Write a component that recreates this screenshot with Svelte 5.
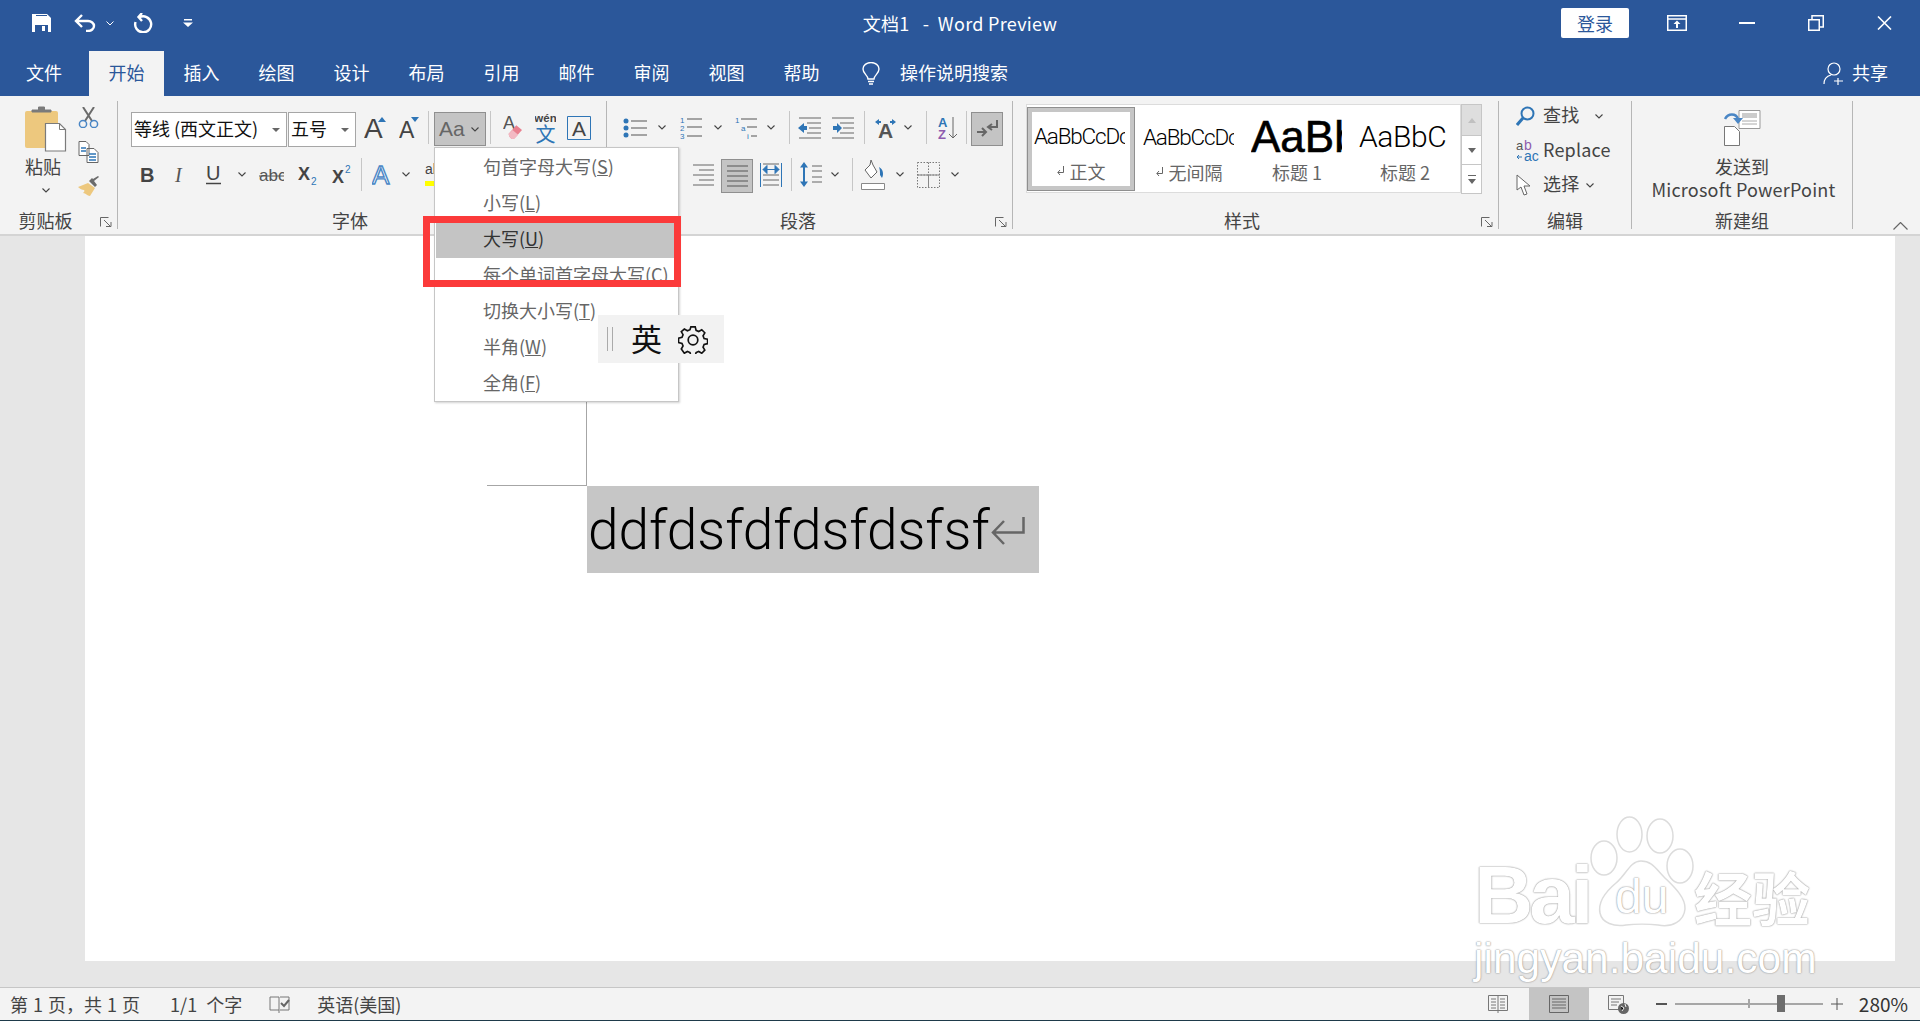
<script>
	const tabs = ['文件', '开始', '插入', '绘图', '设计', '布局', '引用', '邮件', '审阅', '视图', '帮助'];
	const activeTab = '开始';

	const caseItems = [
		{ label: '句首字母大写', key: 'S' },
		{ label: '小写', key: 'L' },
		{ label: '大写', key: 'U', hot: true },
		{ label: '每个单词首字母大写', key: 'C' },
		{ label: '切换大小写', key: 'T' },
		{ label: '半角', key: 'W' },
		{ label: '全角', key: 'F' }
	];

	const styleTiles = [
		{ sample: 'AaBbCcDc', label: '正文', mark: true, selected: true, kind: 'normal' },
		{ sample: 'AaBbCcDc', label: '无间隔', mark: true, kind: 'normal' },
		{ sample: 'AaBbCc', label: '标题 1', kind: 'h1' },
		{ sample: 'AaBbCc', label: '标题 2', kind: 'h2' }
	];
</script>

{#snippet chev(cls = '')}
	<svg class={cls} width="8" height="5" viewBox="0 0 8 5"><path d="M.5.5 4 4 7.5.5" fill="none" stroke="#444" stroke-width="1.1" /></svg>
{/snippet}

{#snippet launcher()}
	<svg class="launcher" width="12" height="10" viewBox="0 0 12 10"><path d="M.5 9.5V.5h8M4 3l6 6M6 9.5h5V5" fill="none" stroke="#666" /></svg>
{/snippet}

{#snippet sep(cls = '')}
	<span class="sep {cls}"></span>
{/snippet}

<div class="word">
	<header class="titlebar">
		<div class="qat">
			<svg class="ml32" width="19" height="18" viewBox="0 0 19 18"><path d="M0 0h15l4 4v14H0z" fill="#fff" /><path d="M3 11h13v7H3z" fill="#2b579a" /><path d="M10 12h3v5h-3z" fill="#fff" /><path d="M4 1h11v1H4z" fill="#2b579a" /></svg>
			<svg class="ml23" width="22" height="18" viewBox="0 0 22 18"><path d="M8 1 2 7l6 6M2 7h12a6 5 0 0 1 0 10h-2" fill="none" stroke="#fff" stroke-width="2.4" /></svg>
			<svg class="ml10" width="8" height="5" viewBox="0 0 8 5"><path d="M.5.5 4 4 7.5.5" fill="none" stroke="#fff" /></svg>
			<svg class="ml19" width="20" height="20" viewBox="0 0 20 20"><path d="M6.500 4.200A8 8 0 1 1 2.500 9M9 0 5.500 4 9 8" fill="none" stroke="#fff" stroke-width="2.400" /></svg>
			<svg class="ml30" width="10" height="8" viewBox="0 0 10 8"><path d="M1 0h8v1.500H1zM0 3.500h10L5 8z" fill="#fff" /></svg>
		</div>
		<div class="doctitle">文档1&nbsp;&nbsp;&nbsp;-&nbsp;&nbsp;Word Preview</div>
		<div class="winctl">
			<button class="signin">登录</button>
			<svg class="ml38" width="20" height="16" viewBox="0 0 20 16"><path d="M.75.75h18.500v14.500H.75zM1 4h18" fill="none" stroke="#fff" stroke-width="1.500" /><path d="M10 5.500 6.500 9H9v4h2V9h2.500z" fill="#fff" /></svg>
			<svg class="ml52" width="16" height="2" viewBox="0 0 16 2"><path d="M0 0h16v2H0z" fill="#fff" /></svg>
			<svg class="ml53" width="16" height="16" viewBox="0 0 16 16"><path d="M.75 4.750h10.500v10.500H.75zM4 4V.75h11.250V12H12" fill="none" stroke="#fff" stroke-width="1.500" /></svg>
			<svg class="ml53 mr28" width="15" height="14" viewBox="0 0 15 14"><path d="m1 .5 13 13M14 .5l-13 13" fill="none" stroke="#fff" stroke-width="1.600" /></svg>
		</div>
	</header>

	<nav class="tabs">
		{#each tabs as tab}
			<div class="tab" class:active={tab === activeTab}>{tab}</div>
		{/each}
		<svg class="ml23" width="18" height="23" viewBox="0 0 18 23"><path d="M6 17c0-4-5-5-5-10a8 6.500 0 0 1 16 0c0 5-5 6-5 10zM6 19.500h6M7 22h4" fill="none" stroke="#fff" stroke-width="1.400" /></svg>
		<span class="search">操作说明搜索</span>
		<div class="share">
			<svg width="22" height="23" viewBox="0 0 22 23"><circle cx="11" cy="7" r="6" fill="none" stroke="#fff" stroke-width="1.200" /><path d="M1 22c0-5 3-8 7-9M15 16v7M11 19h9" fill="none" stroke="#fff" stroke-width="1.200" /></svg>
			<span>共享</span>
		</div>
	</nav>

	<section class="ribbon">
		<div class="group g-clip">
			<div class="clip-body">
				<div class="paste">
					<svg width="42" height="46" viewBox="0 0 42 46"><rect x="0" y="5" width="33" height="37" rx="2" fill="#edc87e" /><path d="M7 6h19v-2h-6.500V1h-6v3H7z" fill="#7b7b7b" stroke="#7b7b7b" /><path d="M20.500 17.500h14l6 6v21.500h-20z" fill="#fff" stroke="#7b7b7b" stroke-width="1.200" /><path d="M34.500 17.500v6h6" fill="none" stroke="#7b7b7b" /></svg>
					<span class="pastelabel">粘贴</span>
					{@render chev('pastechev')}
				</div>
				<div class="clip-tools">
					<svg class="mt1" width="21" height="21" viewBox="0 0 21 21"><path d="M5 0l9 14M16 0 7 14" stroke="#6b6b6b" stroke-width="2" fill="none" /><circle cx="5" cy="17" r="3.600" fill="none" stroke="#4a86c5" stroke-width="1.500" /><circle cx="16" cy="17" r="3.600" fill="none" stroke="#4a86c5" stroke-width="1.500" /></svg>
					<svg width="21" height="22" viewBox="0 0 21 22"><path d="M1 .5h7l3 3v11H1zM9 7.500h7l4 4v10H9z" fill="#fff" stroke="#666" /><path d="M3 7h5M3 10h5M11 13h7M11 16h7M11 19h7" stroke="#2e75b6" stroke-width="1.300" /></svg>
					<svg width="23" height="20" viewBox="0 0 23 20"><path d="m0 11 10-4 7 5-5 8c-3 0-4-3-7-3 1-1 2-2 1-3-2 0-4-1-6-3z" fill="#edc87e" /><path d="m11 5 6 6 2-2-3-4 5-4-1-1-5 3-1-1z" fill="#6b6b6b" /></svg>
				</div>
			</div>
			<div class="foot p-clip"><span class="glabel">剪贴板</span>{@render launcher()}</div>
		</div>

		<div class="group g-font">
			<div class="row">
				<div class="combo c-font ml13"><span>等线 (西文正文)</span><i class="tri"></i></div>
				<div class="combo c-size ml1"><span>五号</span><i class="tri"></i></div>
				<svg class="ml8" width="22" height="21" viewBox="0 0 22 21"><text x="0" y="21" font-size="28" fill="#444">A</text><path d="m14 5 4-5 4 5z" fill="#2e75b6" /></svg>
				<svg class="ml13" width="20" height="21" viewBox="0 0 20 21"><text x="0" y="21" font-size="23" fill="#444">A</text><path d="m12 0h8l-4 5z" fill="#2e75b6" /></svg>
				{@render sep('ml9')}
				<div class="hotbtn aa ml5"><span>Aa</span>{@render chev('aachev')}</div>
				{@render sep('ml4')}
				<svg class="ml12" width="19" height="30" viewBox="0 0 20 30"><text x="0" y="16" font-size="19" fill="#555">A</text><path d="m6 21 8-9 6 5-8 9c-3 2-6-2-6-5z" fill="#e9808f" /><path d="m6 21 4-4 6 5-4 4c-3 2-6-2-6-5z" fill="#f3b9c3" /></svg>
				<svg class="ml13" width="21" height="33" viewBox="0 0 21 33"><text x="10.500" y="11" font-size="11.500" font-weight="bold" text-anchor="middle" fill="#444">wén</text><text x="10.500" y="31" font-size="20" text-anchor="middle" fill="#2e75b6" class="cjk">文</text></svg>
				<svg class="ml11" width="24" height="24" viewBox="0 0 24 24"><path d="M.5.5h23v23H.5z" fill="none" stroke="#2e75b6" /><text x="12" y="20" font-size="21" text-anchor="middle" fill="#444">A</text></svg>
			</div>
			<div class="row row2">
				<svg class="ml22" width="14" height="16" viewBox="0 0 14 16"><text x="0" y="15" font-size="20" font-weight="bold" fill="#444">B</text></svg>
				<svg class="ml19" width="14" height="16" viewBox="0 0 14 16"><text x="2" y="15" font-size="20" font-style="italic" class="serif" fill="#555">I</text></svg>
				<svg class="ml19" width="15" height="20" viewBox="0 0 15 20"><text x="0" y="15" font-size="20" fill="#444">U</text><path d="M0 18.500h15" stroke="#444" stroke-width="1.500" /></svg>
				{@render chev('ml17')}
				<svg class="ml13" width="25" height="16" viewBox="0 0 25 16"><text x="0" y="14" font-size="17" fill="#555">abc</text><path d="M0 9h25" stroke="#555" /></svg>
				<svg class="ml14" width="20" height="20" viewBox="0 0 20 20"><text x="0" y="15" font-size="18" font-weight="bold" fill="#444">X</text><text x="13" y="20" font-size="10" fill="#2e75b6">2</text></svg>
				<svg class="ml14" width="20" height="20" viewBox="0 0 20 20"><text x="0" y="18" font-size="18" font-weight="bold" fill="#444">X</text><text x="13" y="8" font-size="10" fill="#2e75b6">2</text></svg>
				{@render sep('ml9')}
				<svg class="ml10" width="20" height="22" viewBox="0 0 20 22"><text x="0" y="20" font-size="26" fill="#fff" stroke="#4a86c5" stroke-width="1.400">A</text></svg>
				{@render chev('ml10')}
				<svg class="ml15" width="20" height="24" viewBox="0 0 20 24"><text x="0" y="11" font-size="14" fill="#444">ab</text><path d="M0 18h20v5H0z" fill="#ff0" /></svg>
			</div>
			<div class="foot p-font"><span class="glabel">字体</span></div>
		</div>

		<div class="group g-para">
			<div class="row">
				<svg class="ml16" width="24" height="20" viewBox="0 0 24 20"><path d="M8 3h16M8 10h16M8 17h16" stroke="#555" stroke-width="1.200" /><circle cx="3" cy="3" r="2.500" fill="#2e75b6" /><circle cx="3" cy="10" r="2.500" fill="#2e75b6" /><circle cx="3" cy="17" r="2.500" fill="#2e75b6" /></svg>
				{@render chev('ml11')}
				<svg class="ml14" width="22" height="24" viewBox="0 0 22 24"><text x="0" y="7" font-size="8" fill="#2e75b6">1</text><text x="0" y="15" font-size="8" fill="#2e75b6">2</text><text x="0" y="23" font-size="8" fill="#2e75b6">3</text><path d="M7 3h15M7 11h15M7 20h15" stroke="#555" stroke-width="1.200" /></svg>
				{@render chev('ml12')}
				<svg class="ml13" width="23" height="24" viewBox="0 0 23 24"><text x="0" y="7" font-size="8" fill="#2e75b6">1</text><text x="6" y="15" font-size="8" fill="#2e75b6">a</text><text x="12" y="23" font-size="8" fill="#2e75b6">i</text><path d="M6 3h16M12 11h10M16 20h6" stroke="#555" stroke-width="1.200" /></svg>
				{@render chev('ml9')}
				{@render sep('ml14')}
				<svg class="ml8" width="23" height="22" viewBox="0 0 23 22"><path d="M1 1h22M9 6h14M11 11h12M9 16h14M1 21h22" stroke="#666" stroke-width="1.100" /><path d="M0 11l6-5v3h3v4H6v3z" fill="#2e75b6" /></svg>
				<svg class="ml11" width="23" height="22" viewBox="0 0 23 22"><path d="M0 1h22M8 6h14M11 11h11M8 16h14M0 21h22" stroke="#666" stroke-width="1.100" /><path d="M10 11l-5-5v3H1v4h4v3z" fill="#2e75b6" /></svg>
				{@render sep('ml9')}
				<svg class="ml9" width="23" height="20" viewBox="0 0 23 20"><text x="11.500" y="20" font-size="21" font-weight="bold" text-anchor="middle" fill="#555">A</text><path d="M1 4l4-3v2h2v2H5v2zM22 4l-4-3v2h-2v2h2v2z" fill="#2e75b6" /></svg>
				{@render chev('ml7')}
				{@render sep('ml14')}
				<svg class="ml11" width="19" height="24" viewBox="0 0 19 24"><text x="0" y="11" font-size="13" font-weight="bold" fill="#2e75b6">A</text><text x="0" y="23" font-size="13" font-weight="bold" fill="#8e5cae">Z</text><path d="M15 1v21M11 18l4 4 4-4" fill="none" stroke="#666" /></svg>
				{@render sep('ml9')}
				<div class="hotbtn pil ml4">
					<svg width="22" height="20" viewBox="0 0 22 20"><path d="M21 1v7h-8M16 5l-4 3 4 3" fill="none" stroke="#666" stroke-width="2" /><path d="M1 13h8M6 9l4 4-4 4" fill="none" stroke="#666" stroke-width="2" /></svg>
				</div>
			</div>
			<div class="row row2">
				<svg class="ml86" width="21" height="22" viewBox="0 0 21 22"><path d="M0 1h21M6 6h15M0 11h21M6 16h15M0 21h21" stroke="#666" stroke-width="1.100" /></svg>
				<div class="hotbtn just ml7">
					<svg width="21" height="22" viewBox="0 0 21 22"><path d="M0 1h21M0 6h21M0 11h21M0 16h21M0 21h21" stroke="#555" stroke-width="1.100" /></svg>
				</div>
				<svg class="ml7" width="22" height="24" viewBox="0 0 22 24"><path d="M3 1h16M3 12h16M3 17h16M3 22h16" stroke="#666" /><path d="M.5 0v24M21.500 0v24" stroke="#2e75b6" /><path d="M3 6.500h16M3 6.500l4-4v8zM19 6.500l-4-4v8z" stroke="#2e75b6" fill="#2e75b6" /></svg>
				{@render sep('ml9')}
				<svg class="ml8" width="22" height="25" viewBox="0 0 22 25"><path d="M4 0 0 5.500h3v14H0L4 25l4-5.500H5v-14h3z" fill="#2e75b6" /><path d="M12 4h10M12 9h10M12 15h10M12 20h10" stroke="#666" stroke-width="1.100" /></svg>
				{@render chev('ml9')}
				{@render sep('ml13')}
				<svg class="ml8" width="24" height="30" viewBox="0 0 24 30"><path d="M.5 23.500h23v6H.5z" fill="#fff" stroke="#888" /><path d="m10 0-1 5-5 5 6 8 6-6-4-7z" fill="#fff" stroke="#666" /><path d="M18 7c4 2 5 7 3 11l-2-3c0-3 0-5-1-8z" fill="#2e75b6" /></svg>
				{@render chev('ml11')}
				<svg class="ml13" width="23" height="26" viewBox="0 0 23 26"><path d="M.5.500h22v25H.5zM11.500.500v25M.5 13h22" fill="none" stroke="#777" stroke-dasharray="1.500 1.500" /><path d="M11.500 13v12.500M.5 13h22" stroke="#888" /></svg>
				{@render chev('ml11')}
			</div>
			<div class="foot p-para"><span class="glabel">段落</span>{@render launcher()}</div>
		</div>

		<div class="group g-styles">
			<div class="styles-body">
				<div class="gallery">
					{#each styleTiles as tile}
						<div class="tile" class:selected={tile.selected}>
							<div class="sample {tile.kind}">{tile.sample}</div>
							<div class="stylelabel">
								{#if tile.mark}<svg width="8" height="10" viewBox="0 0 8 10"><path d="M6.500 0v6.500H1M3 4 .8 6.500 3 9" fill="none" stroke="#666" /></svg>{/if}
								{tile.label}
							</div>
						</div>
					{/each}
				</div>
				<div class="scroller">
					<div class="sbtn sb-up"><svg width="8" height="5" viewBox="0 0 8 5"><path d="M4 0 8 5H0z" fill="#c0c0c0" /></svg></div>
					<div class="sbtn sb-down"><svg width="8" height="5" viewBox="0 0 8 5"><path d="M0 0h8L4 5z" fill="#666" /></svg></div>
					<div class="sbtn sb-more"><svg width="8" height="9" viewBox="0 0 8 9"><path d="M0 0h8v1H0zM0 4h8L4 9z" fill="#666" /></svg></div>
				</div>
			</div>
			<div class="foot p-styles"><span class="glabel">样式</span>{@render launcher()}</div>
		</div>

		<div class="group g-edit">
			<div class="edit-rows">
				<div class="editrow">
					<svg width="19" height="20" viewBox="0 0 19 20"><circle cx="11.500" cy="7.500" r="6" fill="none" stroke="#2e75b6" stroke-width="2" /><path d="M7 12 1 19" stroke="#2e75b6" stroke-width="3" /></svg>
					<span>查找</span>{@render chev('echev1')}
				</div>
				<div class="editrow">
					<svg width="23" height="22" viewBox="0 0 23 22"><text x="0" y="10" font-size="13" fill="#555">a</text><text x="8" y="10" font-size="14" fill="#8e5cae">b</text><text x="8" y="21" font-size="14" fill="#2e75b6">ac</text><path d="M1 17h5M3 15l-2 2 2 2" fill="none" stroke="#2e75b6" /></svg>
					<span>Replace</span>
				</div>
				<div class="editrow">
					<svg width="15" height="22" viewBox="0 0 15 22"><path d="M1 1v15l4-3 3 8 3-1-3-8h6z" fill="#fff" stroke="#666" /></svg>
					<span>选择</span>{@render chev('echev2')}
				</div>
			</div>
			<div class="foot"><span class="glabel">编辑</span></div>
		</div>

		<div class="group g-new">
			<div class="newbtn">
				<svg width="37" height="36" viewBox="0 0 37 36"><path d="M15 .5h21v18H15z" fill="#fff" stroke="#999" /><path d="M18 3h15v5H18z" fill="#ccc" /><path d="M18 11h15M18 14h15" stroke="#aaa" /><path d="M.5 16.500h10l5 5v14H.5z" fill="#fff" stroke="#777" /><path d="M1 9c3-6 11-6 13 0" fill="none" stroke="#4a86c5" stroke-width="2.500" /><path d="m9 8 5 6 5-6z" fill="#4a86c5" /></svg>
				<span class="l1">发送到</span>
				<span class="l2">Microsoft PowerPoint</span>
			</div>
			<div class="foot"><span class="glabel">新建组</span></div>
		</div>

		<div class="collapse">
			<svg width="15" height="8" viewBox="0 0 15 8"><path d="m.5 7.500 7-7 7 7" fill="none" stroke="#666" stroke-width="1.200" /></svg>
		</div>
	</section>

	<main class="docarea">
		<div class="page">
			<div class="cropmark"></div>
			<div class="selection">
				<span>ddfdsfdfdsfdsfsf</span>
				<svg width="34" height="29" viewBox="0 0 34 29"><path d="M32.500 0v15.500H3M13 4 2 15.500 13 27" fill="none" stroke="#666" stroke-width="2.500" /></svg>
			</div>
		</div>
	</main>

	<footer class="status">
		<span class="s1">第 1 页，共 1 页</span>
		<span class="s2">1/1 个字</span>
		<svg class="s3" width="21" height="18" viewBox="0 0 21 18"><path d="M10 2H1v13h9M10 2v16M11 2h9v13h-9" fill="none" stroke="#777" /><path d="m12 8 3 3 5-6" fill="none" stroke="#666" stroke-width="2" /></svg>
		<span class="s4">英语(美国)</span>
		<div class="viewbtns">
			<svg width="20" height="18" viewBox="0 0 20 18"><path d="M.5.500h19v15H.5zM10 0v18M3 4h5M3 7h5M3 10h5M3 13h5M12 4h5M12 7h5M12 10h5M12 13h5" fill="none" stroke="#777" /></svg>
			<div class="viewactive"><svg width="20" height="18" viewBox="0 0 20 18"><path d="M.5.500h19v17H.5zM3 4h14M3 7h14M3 10h14M3 13h14" fill="none" stroke="#666" /></svg></div>
			<svg width="21" height="19" viewBox="0 0 21 19"><path d="M.5.500h15v14H.5zM3 4h10M3 7h8M3 10h6" fill="none" stroke="#777" /><circle cx="15.500" cy="13.500" r="5.500" fill="#666" /><path d="M13 11l3 2-2 3M17 9l1 3" stroke="#f3f3f3" /></svg>
		</div>
		<div class="zoomctl">
			<span class="zminus"></span>
			<div class="ztrack"><span class="ztick"></span><span class="zthumb"></span></div>
			<svg width="12" height="12" viewBox="0 0 12 12"><path d="M6 0v12M0 6h12" stroke="#555" /></svg>
			<span class="zval">280%</span>
		</div>
	</footer>

	<div class="casemenu">
		{#each caseItems as item}
			<div class="caseitem" class:hot={item.hot}>{item.label}(<u>{item.key}</u>)</div>
		{/each}
	</div>
	<div class="redbox"></div>

	<div class="ime">
		<span class="imegrip"></span>
		<span class="imechar">英</span>
		<svg width="30" height="30" viewBox="0 0 30 30">
			<path d="M12.500 1h5l1 4 3 1.300 3.500-2 3.500 3.500-2 3.500 1.200 3 4 1v5l-4 1-1.200 3 2 3.500-3.500 3.500-3.500-2-3 1.200-1 4h-5l-1-4-3-1.200-3.500 2L1.500 26.500l2-3.500-1.200-3-4-1v-5l4-1 1.200-3-2-3.500L5 3.500l3.500 2 3-1.200z" transform="translate(2 2) scale(.87)" fill="none" stroke="#111" stroke-width="1.900" />
			<circle cx="15" cy="16" r="4.800" fill="none" stroke="#111" stroke-width="1.700" />
		</svg>
	</div>

	<div class="watermark">
		<span class="wm-bai">Bai</span>
		<svg class="wm-paw" width="106" height="114" viewBox="0 0 106 114">
			<g fill="#fff" stroke="#dcdcdc" stroke-width="1.500">
				<ellipse cx="14" cy="43" rx="13" ry="17" />
				<ellipse cx="39.500" cy="19.500" rx="12.500" ry="17.500" />
				<ellipse cx="70" cy="21" rx="13" ry="17" />
				<ellipse cx="90" cy="51" rx="13" ry="17" />
				<path d="M51 46C40 46 36 60 26 68 14 78 8 88 10 98c2 10 14 14 26 12 8-1 24-1 32 0 14 3 26-4 27-16 1-12-13-24-21-32-8-8-12-16-23-16z" />
			</g>
		</svg>
		<span class="wm-du">du</span>
		<span class="wm-jy">经验</span>
		<span class="wm-url">jingyan.baidu.com</span>
	</div>
</div>

<style>
	:global(body) {
		margin: 0;
		background: #e6e6e6;
	}

	.word {
		position: relative;
		width: 1920px;
		height: 1021px;
		overflow: hidden;
		display: flex;
		flex-direction: column;
		font-family: "Noto Sans CJK SC", "Liberation Sans", sans-serif;
		font-size: 18px;
		line-height: 22px;
		color: #444;
		background: #e6e6e6;
	}

	svg {
		flex: none;
		display: block;
	}

	svg text {
		font-family: "Liberation Sans", sans-serif;
	}

	svg text.cjk {
		font-family: "Noto Sans CJK SC", sans-serif;
	}

	svg text.serif {
		font-family: "Liberation Serif", serif;
	}

	:global(.ml1) { margin-left: 1px; }
	:global(.ml4) { margin-left: 4px; }
	:global(.ml5) { margin-left: 5px; }
	:global(.ml7) { margin-left: 7px; }
	:global(.ml8) { margin-left: 8px; }
	:global(.ml9) { margin-left: 9px; }
	:global(.ml10) { margin-left: 10px; }
	:global(.ml11) { margin-left: 11px; }
	:global(.ml12) { margin-left: 12px; }
	:global(.ml13) { margin-left: 13px; }
	:global(.ml14) { margin-left: 14px; }
	:global(.ml15) { margin-left: 15px; }
	:global(.ml16) { margin-left: 16px; }
	:global(.ml17) { margin-left: 17px; }
	:global(.ml19) { margin-left: 19px; }
	:global(.ml22) { margin-left: 22px; }
	:global(.ml23) { margin-left: 23px; }
	:global(.ml30) { margin-left: 30px; }
	:global(.ml32) { margin-left: 32px; }
	:global(.ml38) { margin-left: 38px; }
	:global(.ml52) { margin-left: 52px; }
	:global(.ml53) { margin-left: 53px; }
	:global(.ml86) { margin-left: 86px; }
	:global(.mr28) { margin-right: 28px; }
	:global(.mt1) { margin-top: 1px; }

	.titlebar {
		height: 51px;
		flex: none;
		display: grid;
		grid-template-columns: 1fr auto 1fr;
		align-items: center;
		background: #2b579a;
		color: #fff;
	}

	.qat {
		display: flex;
		align-items: center;
		padding-bottom: 5px;
	}

	.doctitle {
		padding-bottom: 5px;
		letter-spacing: 0.3px;
	}

	.winctl {
		display: flex;
		align-items: center;
		justify-content: flex-end;
		padding-bottom: 5px;
	}

	.signin {
		width: 68px;
		height: 30px;
		padding: 0;
		border: 0;
		border-radius: 2px;
		background: #fff;
		color: #2b579a;
		font: inherit;
	}

	.tabs {
		height: 45px;
		flex: none;
		display: flex;
		align-items: stretch;
		padding-left: 7px;
		background: #2b579a;
		color: #fff;
	}

	.tabs > svg {
		align-self: center;
	}

	.tab {
		width: 75px;
		display: flex;
		align-items: center;
		justify-content: center;
		padding-bottom: 4px;
		box-sizing: border-box;
	}

	.tab:first-child {
		width: 82px;
		padding-right: 8px;
	}

	.tab.active {
		background: #f3f3f3;
		color: #2b579a;
	}

	.search {
		align-self: center;
		margin-left: 20px;
		padding-bottom: 4px;
	}

	.share {
		margin-left: auto;
		margin-right: 32px;
		display: flex;
		align-items: center;
		gap: 7px;
	}

	.share span {
		padding-bottom: 4px;
	}

	.ribbon {
		height: 140px;
		flex: none;
		display: flex;
		align-items: flex-start;
		padding-top: 5px;
		box-sizing: border-box;
		background: #f3f3f3;
		border-bottom: 2px solid #d4d4d4;
	}

	.group {
		height: 128px;
		flex: none;
		box-sizing: border-box;
		display: flex;
		flex-direction: column;
		border-right: 1px solid #b6b6b6;
	}

	.g-clip { width: 118px; }
	.g-font { width: 489px; padding-top: 11px; }
	.g-para { width: 406px; padding-top: 11px; }
	.g-styles { width: 486px; }
	.g-edit { width: 133px; }
	.g-new { width: 221px; }

	.row {
		height: 35px;
		flex: none;
		box-sizing: border-box;
		display: flex;
		align-items: center;
		padding-bottom: 4px;
	}

	.row2 {
		margin-top: 12px;
	}

	.foot {
		margin-top: auto;
		height: 18px;
		display: flex;
		align-items: center;
		color: #444;
		line-height: 18px;
	}

	.glabel {
		flex: 1;
		text-align: center;
	}

	.p-clip .glabel { padding-right: 9px; }
	.p-font .glabel { padding-right: 24px; }
	.p-para .glabel { padding-right: 6px; }
	.p-styles .glabel { padding-right: 10px; }

	:global(.launcher) {
		margin: 4px 5px 0 0;
	}

	.clip-body {
		display: flex;
		padding-top: 5px;
	}

	.paste {
		margin-left: 25px;
		width: 42px;
		display: flex;
		flex-direction: column;
	}

	.pastelabel {
		margin-top: 3px;
		line-height: 22px;
		white-space: nowrap;
	}

	:global(.pastechev) {
		margin: 11px 0 0 17px;
	}

	.clip-tools {
		margin-left: 11px;
		display: flex;
		flex-direction: column;
		gap: 13px;
	}

	.combo {
		height: 35px;
		align-self: flex-start;
		box-sizing: border-box;
		display: flex;
		align-items: center;
		background: #fff;
		border: 1px solid #a6a6a6;
		color: #111;
		padding: 0 0 0 2px;
	}

	.c-font { width: 156px; }
	.c-size { width: 68px; }

	.combo span {
		flex: 1;
		white-space: nowrap;
		padding-bottom: 4px;
	}

	.tri {
		width: 0;
		height: 0;
		margin-right: 6px;
		border-left: 4px solid transparent;
		border-right: 4px solid transparent;
		border-top: 4px solid #666;
	}

	.sep {
		width: 1px;
		height: 33px;
		flex: none;
		background: #c6c6c6;
	}

	.hotbtn {
		box-sizing: border-box;
		display: flex;
		align-items: center;
		justify-content: center;
		height: 34px;
		align-self: flex-start;
		background: #c4c4c4;
		border: 1px solid #8f8f8f;
	}

	.aa {
		width: 52px;
		justify-content: flex-start;
		padding-left: 4px;
		color: #666;
		font-family: "Liberation Sans", sans-serif;
		font-size: 21px;
		gap: 6px;
	}

	.pil {
		width: 32px;
	}

	.just {
		width: 32px;
	}

	.styles-body {
		display: flex;
		padding: 3px 0 0 13px;
	}

	.gallery {
		width: 435px;
		height: 89px;
		box-sizing: border-box;
		display: flex;
		padding: 2px 0 0 0;
		background: #fff;
		border: 1px solid #dcdcdc;
		overflow: hidden;
	}

	.tile {
		width: 108px;
		height: 84px;
		flex: none;
		box-sizing: border-box;
		border: 6px solid transparent;
	}

	.tile.selected {
		border: 5px solid #c6c6c6;
		outline: 1px solid #8f8f8f;
		outline-offset: -1px;
		padding: 1px;
	}

	.sample {
		width: 91px;
		height: 48px;
		margin-left: 2px;
		overflow: hidden;
		white-space: nowrap;
		line-height: 48px;
		color: #000;
		font-family: Roboto, sans-serif;
		font-weight: 300;
		font-size: 22.5px;
		letter-spacing: -1.2px;
	}

	.tile.selected .sample {
		margin-left: 1px;
		margin-top: -1px;
	}

	.sample.h1 {
		font-family: "Liberation Sans", sans-serif;
		font-weight: 400;
		font-size: 44px;
		letter-spacing: 0;
		-webkit-text-stroke: 0.6px #000;
	}

	.sample.h2 {
		font-size: 30px;
		letter-spacing: -0.4px;
		width: 87px;
	}

	.stylelabel {
		height: 24px;
		display: flex;
		align-items: center;
		justify-content: center;
		gap: 5px;
		padding-bottom: 2px;
		box-sizing: border-box;
		color: #666;
		white-space: nowrap;
	}

	.scroller {
		display: flex;
		flex-direction: column;
		width: 21px;
	}

	.sbtn {
		box-sizing: border-box;
		display: flex;
		align-items: center;
		justify-content: center;
		border: 1px solid #c6c6c6;
		background: #fff;
	}

	.sb-up { height: 32px; background: #dedede; }
	.sb-down { height: 29px; border-top: 0; }
	.sb-more { height: 29px; border-top: 0; }

	.edit-rows {
		display: flex;
		flex-direction: column;
		gap: 4.5px;
	}

	.editrow {
		height: 30px;
		display: flex;
		align-items: center;
		position: relative;
		padding-left: 44px;
	}

	.editrow span {
		padding-bottom: 4px;
		letter-spacing: 0.2px;
	}

	.editrow svg:first-child {
		position: absolute;
		left: 17px;
	}

	:global(.echev1) {
		margin-left: 16px;
	}

	:global(.echev2) {
		margin-left: 7px;
	}

	.newbtn {
		padding-top: 9px;
		display: flex;
		flex-direction: column;
		align-items: center;
	}

	.l1 {
		margin-top: 9px;
	}

	.l2 {
		margin: 1px 0 0 3px;
		white-space: nowrap;
		letter-spacing: 0.2px;
	}

	.collapse {
		margin: 121px 0 0 40px;
	}

	.docarea {
		flex: 1;
		min-height: 0;
	}

	.page {
		position: relative;
		width: 1810px;
		height: 725px;
		margin-left: 85px;
		box-sizing: border-box;
		padding: 250px 0 0 502px;
		background: #fff;
	}

	.cropmark {
		position: absolute;
		left: 402px;
		top: 0;
		width: 99px;
		height: 249px;
		border-right: 1px solid #a6a6a6;
		border-bottom: 1px solid #a6a6a6;
	}

	.selection {
		width: 452px;
		height: 87px;
		display: flex;
		align-items: center;
		padding-left: 1px;
		box-sizing: border-box;
		background: #c6c6c6;
		color: #000;
		font-family: Roboto, sans-serif;
		font-weight: 300;
		font-size: 55px;
	}

	.selection svg {
		margin: 4px 0 0 1px;
	}

	.status {
		height: 34px;
		flex: none;
		box-sizing: border-box;
		display: flex;
		align-items: center;
		background: #f3f3f3;
		border-top: 1px solid #c6c6c6;
		border-bottom: 1px solid #1e3a4a;
		color: #444;
		white-space: nowrap;
	}

	.s1 { margin-left: 10px; word-spacing: 1px; }
	.s2 { margin-left: 30px; word-spacing: 5px; }
	.s3 { margin-left: 27px; }
	.s4 { margin-left: 27px; }

	.viewbtns {
		margin-left: auto;
		display: flex;
		align-items: center;
		height: 100%;
	}

	.viewactive {
		width: 60px;
		height: 100%;
		margin: 0 19px 0 21px;
		display: flex;
		align-items: center;
		justify-content: center;
		background: #c4c4c4;
	}

	.zoomctl {
		display: flex;
		align-items: center;
		margin-left: 27px;
	}

	.zminus {
		width: 11px;
		height: 1.5px;
		background: #555;
	}

	.ztrack {
		position: relative;
		width: 148px;
		height: 2px;
		margin: 0 8px;
		background: #a6a6a6;
	}

	.ztick {
		position: absolute;
		left: 73px;
		top: -4px;
		width: 2px;
		height: 9px;
		background: #a6a6a6;
	}

	.zthumb {
		position: absolute;
		left: 102px;
		top: -8px;
		width: 8px;
		height: 17px;
		background: #6d6d6d;
	}

	.zval {
		margin: 0 12px 0 16px;
		color: #333;
		font-size: 19px;
	}

	.casemenu {
		position: absolute;
		left: 434px;
		top: 147px;
		width: 245px;
		height: 255px;
		box-sizing: border-box;
		padding-top: 2px;
		background: #fff;
		border: 1px solid #c6c6c6;
		box-shadow: 1px 1px 2px rgba(0, 0, 0, 0.18);
	}

	.caseitem {
		height: 36px;
		display: flex;
		align-items: center;
		margin: 0 1px;
		padding: 0 0 5px 47px;
		box-sizing: border-box;
		color: #666;
		white-space: nowrap;
	}

	.caseitem.hot {
		background: #c4c4c4;
		color: #333;
	}

	.redbox {
		position: absolute;
		left: 423px;
		top: 216px;
		width: 258px;
		height: 71px;
		box-sizing: border-box;
		border: 7px solid #fb3a3a;
	}

	.ime {
		position: absolute;
		left: 598px;
		top: 315px;
		width: 126px;
		height: 48px;
		display: flex;
		align-items: center;
		background: #f2f2f2;
	}

	.imegrip {
		width: 4px;
		height: 24px;
		margin-left: 9px;
		border-left: 1px solid #aaa;
		border-right: 1px solid #aaa;
	}

	.imechar {
		margin: 0 16px 0 18px;
		padding-bottom: 2px;
		font-size: 31px;
		line-height: 40px;
		color: #111;
	}

	.watermark {
		position: absolute;
		left: 1470px;
		top: 815px;
		width: 350px;
		height: 170px;
	}

	.wm-bai, .wm-du, .wm-jy, .wm-url {
		position: absolute;
		color: #fff;
		text-shadow: 0 0 1.5px #999, 0 0 1.5px #999;
		white-space: nowrap;
		font-family: "Liberation Sans", sans-serif;
	}

	.wm-bai {
		left: 4px;
		top: 33px;
		font-size: 82px;
		line-height: 94px;
		font-weight: 700;
		letter-spacing: -4px;
	}

	.wm-paw {
		position: absolute;
		left: 120px;
		top: 0;
	}

	.wm-du {
		left: 145px;
		top: 52px;
		font-size: 48px;
		line-height: 60px;
	}

	.wm-jy {
		left: 224px;
		top: 42px;
		font-family: "Noto Sans CJK SC", sans-serif;
		font-size: 58px;
		line-height: 78px;
		font-weight: 700;
	}

	.wm-url {
		left: 4px;
		top: 120px;
		font-size: 42.5px;
		line-height: 48px;
	}
</style>
